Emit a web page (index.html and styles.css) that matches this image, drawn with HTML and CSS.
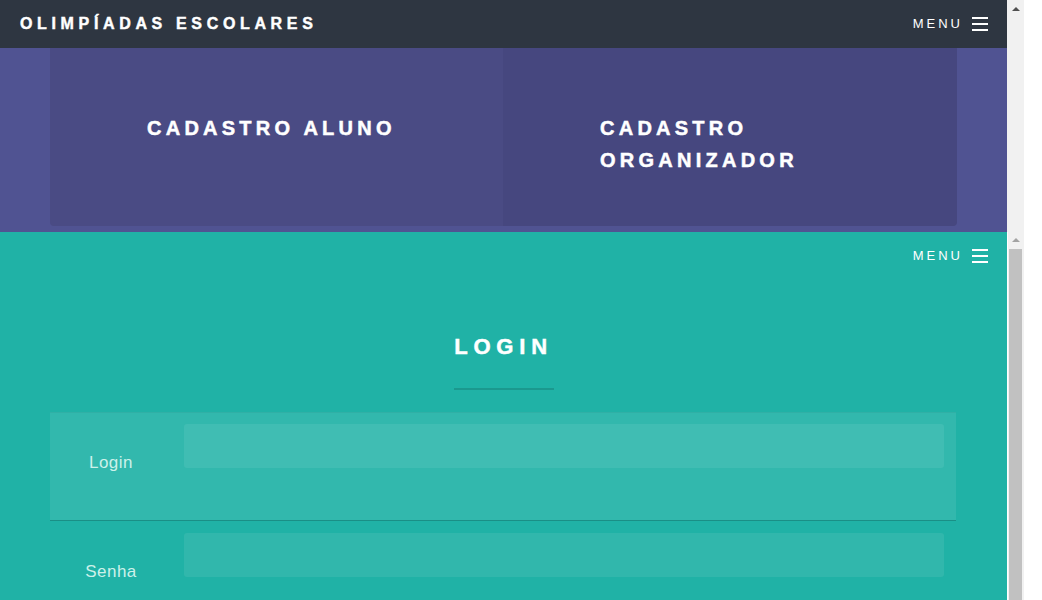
FILE: index.html
```html
<!DOCTYPE html>
<html lang="pt-BR">
<head>
<meta charset="utf-8">
<title>Olimpíadas Escolares</title>
<link rel="stylesheet" href="styles.css">
</head>
<body>
<div class="frame">
  <div class="page">
    <header class="navbar">
      <a class="brand" href="#">OLIMPÍADAS ESCOLARES</a>
      <button class="menu-toggle" type="button">MENU<span class="burger"><i></i><i></i><i></i></span></button>
    </header>

    <section class="portfolio">
      <div class="cards">
        <a class="card card-left" href="#"><span class="card-title">CADASTRO ALUNO</span></a>
        <a class="card card-right" href="#"><span class="card-title">CADASTRO ORGANIZADOR</span></a>
      </div>
    </section>

    <section class="login">
      <header class="navbar navbar-clear">
        <button class="menu-toggle" type="button">MENU<span class="burger"><i></i><i></i><i></i></span></button>
      </header>
      <h2 class="login-title">LOGIN</h2>
      <hr class="divider">
      <form class="login-form">
        <div class="field field-focus">
          <label class="field-label" for="login">Login</label>
          <input class="field-input" id="login" type="text">
        </div>
        <div class="field">
          <label class="field-label" for="senha">Senha</label>
          <input class="field-input" id="senha" type="password">
        </div>
      </form>
    </section>
  </div>

  <div class="scrollbar">
    <div class="sb-top"><span class="sb-arrow"></span></div>
    <div class="sb-bottom"><span class="sb-arrow sb-arrow-light"></span><div class="sb-thumb"></div></div>
  </div>
</div>
</body>
</html>
```

FILE: styles.css
```css
* {
  box-sizing: border-box;
  margin: 0;
  padding: 0;
}

html,
body {
  height: 100%;
}

body {
  margin: 0;
  overflow: hidden;
  background: #ffffff;
  font-family: "Liberation Sans", Arial, sans-serif;
}

.frame {
  display: flex;
  width: 1024px;
  height: 600px;
  overflow: hidden;
}

.page {
  flex: none;
  width: 1007px;
  height: 600px;
  overflow: hidden;
  display: flex;
  flex-direction: column;
}

/* ---------- navbar ---------- */
.navbar {
  flex: none;
  height: 48px;
  display: flex;
  align-items: center;
  justify-content: space-between;
  padding: 0 19px 0 20px;
  background: #2e3641;
}

.navbar-clear {
  background: transparent;
  justify-content: flex-end;
}

.brand {
  color: #ffffff;
  text-decoration: none;
  font-weight: 700;
  font-size: 16px;
  letter-spacing: 4.65px;
  -webkit-text-stroke: 0.45px #ffffff;
}

.menu-toggle {
  display: flex;
  align-items: center;
  background: none;
  border: none;
  color: #ffffff;
  font-family: "Liberation Sans", Arial, sans-serif;
  font-size: 13px;
  letter-spacing: 3px;
  line-height: 16px;
}

.burger {
  display: flex;
  flex-direction: column;
  gap: 4px;
  width: 16px;
  margin-left: 9px;
}

.burger i {
  display: block;
  height: 2px;
  background: #ffffff;
}

/* ---------- portfolio cards ---------- */
.portfolio {
  flex: none;
  background: #505392;
  padding: 0 50px 6px;
}

.cards {
  display: grid;
  grid-template-columns: 453px 454px;
  height: 178px;
}

.card {
  display: block;
  padding: 64px 97px 0;
  text-decoration: none;
}

.card-left {
  background: #4a4b84;
  border-radius: 0 0 0 4px;
}

.card-right {
  background: #46477f;
  border-radius: 0 0 4px 0;
}

.card-title {
  display: block;
  color: #ffffff;
  font-weight: 700;
  font-size: 20px;
  letter-spacing: 4.25px;
  line-height: 32px;
  -webkit-text-stroke: 0.5px #ffffff;
}

/* ---------- login ---------- */
.login {
  flex: 1;
  background: #20b2a6;
}

.login-title {
  margin-top: 54px;
  text-align: center;
  color: #ffffff;
  font-weight: 700;
  font-size: 22px;
  letter-spacing: 5.8px;
  line-height: 26px;
  -webkit-text-stroke: 0.5px #ffffff;
}

.divider {
  width: 100px;
  height: 2px;
  margin: 28px auto 0;
  border: none;
  background: #1b988e;
}

.login-form {
  margin: 22px 51px 0 50px;
}

.field {
  display: flex;
  gap: 12px;
  padding: 12px 12px 48px 0;
}

.field-focus {
  background: #32b8ad;
  box-shadow: inset 0 1px 0 rgba(0, 0, 0, 0.04);
  border-bottom: 1px solid #1a8f86;
}

.field-label {
  flex: none;
  width: 122px;
  height: 48px;
  padding-top: 29px;
  text-align: center;
  color: #cdf1ea;
  font-size: 17px;
  line-height: 19px;
  letter-spacing: 0.5px;
}

.field-input {
  flex: 1;
  height: 44px;
  border: none;
  border-radius: 3px;
  background: #31b7ac;
  outline: none;
}

.field-focus .field-input {
  background: #40bdb3;
}

/* ---------- fake scrollbar ---------- */
.scrollbar {
  flex: none;
  width: 17px;
  height: 600px;
  display: flex;
  flex-direction: column;
  background: #f1f1f1;
}

.sb-top {
  flex: none;
  height: 232px;
  padding-top: 7px;
}

.sb-bottom {
  flex: 1;
  display: flex;
  flex-direction: column;
  padding-top: 6px;
  border-left: 1px solid #ffffff;
}

.sb-arrow {
  display: block;
  width: 0;
  height: 0;
  margin: 0 auto;
  border-left: 4px solid transparent;
  border-right: 4px solid transparent;
  border-bottom: 4px solid #505050;
}

.sb-arrow-light {
  border-bottom-color: #a3a3a3;
}

.sb-thumb {
  flex: 1;
  margin: 7px 2px 0 1px;
  background: #c1c1c1;
}
```
